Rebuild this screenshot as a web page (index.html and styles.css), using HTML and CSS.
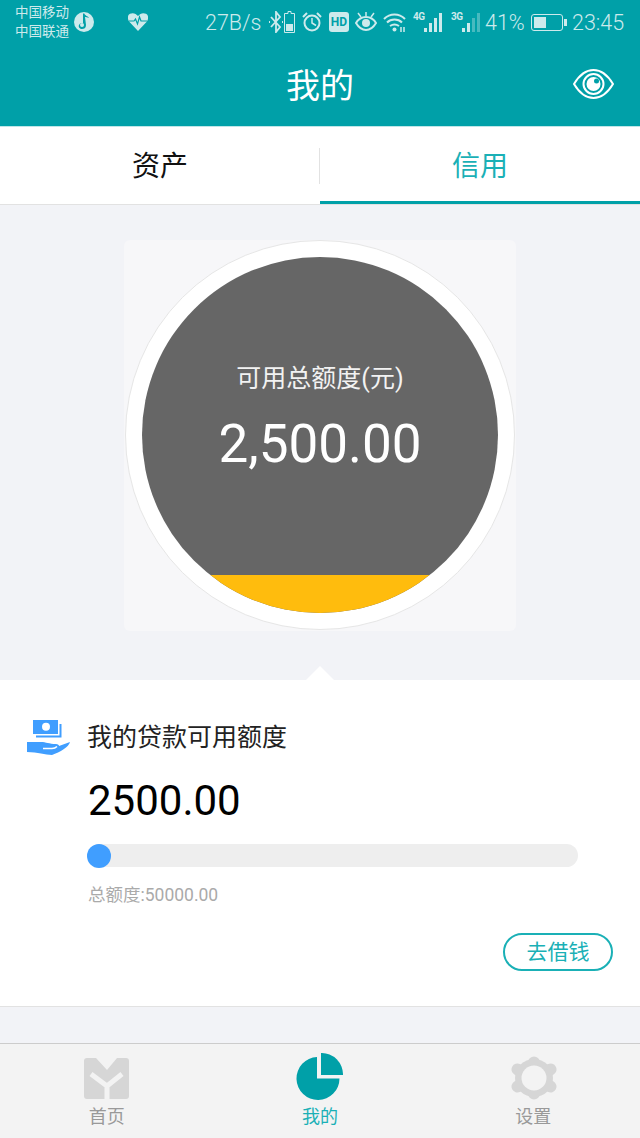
FILE: index.html
```html
<!DOCTYPE html>
<html lang="zh-CN">
<head>
	<meta charset="UTF-8">
	<title>我的</title>
	<link rel="stylesheet" href="styles.css">
</head>
<body>
	<div class="page">
		<div class="top">
			<div class="status">
				<div class="carrier">中国移动<br>中国联通</div>
				<svg class="ic-music" width="20" height="20" viewBox="0 0 20 20"><circle cx="10" cy="10" r="10" fill="#cdeaec"/><path d="M9 2l1-1c1 3 4 3 5 5-2-1-3-1-4-1l1 8c0 3-2 4-4 4s-4-2-3-4 3-2 4-2z" fill="#00a0a8"/><circle cx="8" cy="13" r="2" fill="#cdeaec"/></svg>
				<svg class="ic-heart" width="20" height="18" viewBox="0 0 20 18"><path d="M10 18L1.500 9C-1 6-.5 2 2 .8 5-.7 8 .5 10 3c2-2.500 5-3.700 8-2.200 2.500 1.200 3 5.200.5 8.200z" fill="#cdeaec"/><path d="M1 8h5l1.500-2 2 5 2-7 1.500 4h6" fill="none" stroke="#00a0a8" stroke-width="1.200"/></svg>
				<span class="speed">27B/s</span>
				<svg class="ic-bt" width="14" height="22" viewBox="0 0 14 22"><path d="M2 6l9 10-4 5V1l4 5-9 10" fill="none" stroke="#cdeaec" stroke-width="1.800"/><path d="M0 11h1M13 11h1" stroke="#cdeaec" stroke-width="2"/></svg>
				<svg class="ic-batt" width="11" height="22" viewBox="0 0 11 22"><path d="M4 .5h3v2h3.500v19H.5v-19H4z" fill="none" stroke="#cdeaec"/><rect x="2" y="13" width="7" height="7" fill="#cdeaec"/></svg>
				<svg class="ic-alarm" width="20" height="20" viewBox="0 0 20 20"><circle cx="10" cy="11" r="7.500" fill="none" stroke="#cdeaec" stroke-width="2"/><path d="M10 6v5l4 2.500" fill="none" stroke="#cdeaec" stroke-width="1.500"/><path d="M1 5l4-4M19 5l-4-4" stroke="#cdeaec" stroke-width="2"/></svg>
				<span class="hd">HD</span>
				<svg class="ic-eye" width="22" height="20" viewBox="0 0 22 20"><path d="M1 11c3-5 7-6 10-6s7 1 10 6c-3 5-7 7-10 7s-7-2-10-7z" fill="none" stroke="#cdeaec" stroke-width="2"/><circle cx="11" cy="11" r="4" fill="#cdeaec"/><path d="M3 1l3 4M19 1l-3 4M11 0v4" stroke="#cdeaec" stroke-width="1.500"/></svg>
				<svg class="ic-wifi" width="24" height="20" viewBox="0 0 24 20"><path d="M1 7c6-6 15-6 21 0M4 10.500c4-4 11-4 15 0M7 14c3-2 6-2 9 0" fill="none" stroke="#cdeaec" stroke-width="2"/><circle cx="11.500" cy="17.500" r="2" fill="#cdeaec"/><path d="M18 15v5M21 15v5" stroke="#cdeaec" stroke-width="1.500"/></svg>
				<div class="signal">
					<span class="net">4G</span>
					<i class="bar bar1"></i><i class="bar bar2"></i><i class="bar bar3"></i><i class="bar bar4"></i>
				</div>
				<div class="signal">
					<span class="net">3G</span>
					<i class="bar bar1"></i><i class="bar bar2"></i><i class="bar bar3 off"></i><i class="bar bar4 off"></i>
				</div>
				<span class="pct">41%</span>
				<div class="batt"><div class="batt-fill"></div></div>
				<div class="batt-tip"></div>
				<span class="time">23:45</span>
			</div>
			<div class="titlebar">
				<div class="title">我的</div>
				<svg class="ic-view" width="41" height="30" viewBox="0 0 41 30"><path d="M1 15C7 5 14 1 20.500 1S34 5 40 15C34 25 27 29 20.500 29S7 25 1 15z" fill="none" stroke="#fff" stroke-width="2"/><circle cx="20.500" cy="15" r="10" fill="none" stroke="#fff" stroke-width="2"/><circle cx="20.500" cy="15" r="7" fill="#fff"/><circle cx="23.500" cy="12" r="2.500" fill="#00a0a8"/></svg>
			</div>
		</div>

		<div class="tabs">
			<div class="tab">资产</div>
			<div class="tab tab-on">信用</div>
		</div>

		<div class="gauge-area">
			<div class="gauge-box">
				<div class="gauge-ring">
					<div class="gauge">
						<div class="gauge-main">
							<div class="gauge-label">可用总额度(元)</div>
							<div class="gauge-num">2,500.00</div>
						</div>
						<div class="gauge-level"></div>
					</div>
				</div>
			</div>
		</div>

		<div class="panel">
			<div class="arrow"></div>
			<div class="panel-head">
				<svg class="ic-loan" width="44" height="37" viewBox="0 0 44 37"><rect x="7" y="1" width="25" height="14" fill="#409eff"/><circle cx="20" cy="7.700" r="4" fill="#fff"/><path d="M34.500 5V17.500H10" fill="none" stroke="#409eff" stroke-width="2"/><path d="M1 23H15C20 23 23 25 30 25 32 25 33 26 33 27L44 23C43 28 34 33 26 36 19 36 12 33 1 33z" fill="#409eff"/><path d="M17 29.500H26Q29 29.500 31 27.500" fill="none" stroke="#fff" stroke-width="1.500"/></svg>
				<div class="panel-title">我的贷款可用额度</div>
			</div>
			<div class="panel-body">
				<div class="amount">2500.00</div>
				<div class="track"><div class="dot"></div></div>
				<div class="total">总额度:50000.00</div>
			</div>
			<div class="panel-foot">
				<div class="borrow">去借钱</div>
			</div>
		</div>

		<div class="spacer"></div>

		<div class="nav">
			<div class="nav-item">
				<svg class="nav-ic" width="47" height="48" viewBox="0 0 47 48"><path d="M4 5H13L24 17 34 5H43A3 3 0 0 1 46 8V43A3 3 0 0 1 43 46H4A3 3 0 0 1 1 43V8A3 3 0 0 1 4 5z" fill="#d6d6d6"/><path d="M8 21L24 33 39 21M24 33V46" fill="none" stroke="#f3f3f3" stroke-width="5"/></svg>
				<span>首页</span>
			</div>
			<div class="nav-item nav-on">
				<svg class="nav-ic" width="47" height="48" viewBox="0 0 47 48"><path d="M21 4V25.500H43.500A21.500 21.500 0 1 1 21 4z" fill="#00a0a8"/><path d="M25 0A21.500 21.500 0 0 1 47 22H25z" fill="#00a0a8"/></svg>
				<span>我的</span>
			</div>
			<div class="nav-item">
				<svg class="nav-ic" width="48" height="48" viewBox="0 0 48 48"><circle cx="25" cy="25" r="19" fill="#d6d6d6"/><path d="M25 25V9.500M25 25L41.500 16.500M25 25L41.500 33.500M25 25V40.500M25 25L8.500 33.500M25 25L8.500 16.500" fill="none" stroke="#d6d6d6" stroke-width="12" stroke-linecap="round"/><circle cx="25" cy="25" r="12.500" fill="#f3f3f3"/></svg>
				<span>设置</span>
			</div>
		</div>
	</div>
</body>
</html>
```

FILE: styles.css
```css
*{
	margin: 0;
	padding: 0;
	box-sizing: border-box;
}
body{
	font-family: Roboto, "Noto Sans CJK SC", sans-serif;
	background-color: #f2f3f7;
}
.page{
	width: 640px;
	height: 1138px;
	display: flex;
	flex-direction: column;
	overflow: hidden;
}

/* top bar */
.top{
	height: 126px;
	background-color: #00a0a8;
}
.status{
	height: 44px;
	padding-left: 15px;
	display: flex;
	align-items: center;
	color: #cdeaec;
}
.carrier{
	width: 55px;
	font-size: 13.5px;
	line-height: 19px;
	margin-top: -1px;
	white-space: nowrap;
}
.status svg{
	flex-shrink: 0;
}
.ic-music{
	margin-left: 4px;
}
.ic-heart{
	margin-left: 34px;
}
.speed{
	margin-left: 57px;
	width: 57px;
	font-size: 21.5px;
	font-weight: 300;
	white-space: nowrap;
}
.ic-bt{
	margin-left: 7px;
}
.ic-batt{
	margin-left: 1px;
}
.ic-alarm{
	margin-left: 7px;
}
.hd{
	margin-left: 7px;
	width: 20px;
	height: 20px;
	border-radius: 3px;
	background-color: #cdeaec;
	color: #00a0a8;
	font-size: 12px;
	font-weight: 700;
	line-height: 20px;
	text-align: center;
}
.ic-eye{
	margin-left: 6px;
}
.ic-wifi{
	margin-left: 6px;
}
.signal{
	margin: -1px 0 0 6px;
	width: 31px;
	height: 20px;
	display: flex;
	align-items: flex-end;
	gap: 2px;
}
.signal + .signal{
	margin-left: 7px;
}
.net{
	width: 10px;
	margin-right: -1px;
	align-self: flex-start;
	font-size: 10px;
	font-weight: 700;
	letter-spacing: -0.5px;
	line-height: 9px;
}
.bar{
	width: 3px;
	background-color: #cdeaec;
}
.bar1{
	height: 4px;
}
.bar2{
	height: 9px;
}
.bar3{
	height: 14px;
}
.bar4{
	height: 19px;
}
.off{
	opacity: 0.35;
}
.pct{
	margin-left: 3px;
	width: 40px;
	font-size: 21.5px;
	font-weight: 300;
	white-space: nowrap;
}
.batt{
	margin-left: 6px;
	width: 32px;
	height: 17px;
	padding: 2px;
	border: 1px solid #cdeaec;
	border-radius: 3px;
}
.batt-fill{
	width: 12px;
	height: 100%;
	background-color: #cdeaec;
}
.batt-tip{
	width: 3px;
	height: 7px;
	margin-left: 1px;
	background-color: #cdeaec;
}
.time{
	margin-left: 5px;
	font-size: 21.5px;
	font-weight: 300;
}
.titlebar{
	height: 82px;
	padding-right: 26px;
	display: flex;
	align-items: center;
	justify-content: flex-end;
	position: relative;
}
.title{
	position: absolute;
	left: 0;
	right: 0;
	top: 19px;
	text-align: center;
	font-size: 34px;
	line-height: 46px;
	color: #fff;
}
.ic-view{
	margin-top: -2px;
}

/* tabs */
.tabs{
	height: 79px;
	background-color: #fff;
	border-top: 1px solid #bfe6e8;
	border-bottom: 1px solid #e2e2e2;
	display: flex;
}
.tab{
	width: 320px;
	height: 77px;
	font-size: 28px;
	line-height: 79px;
	text-align: center;
	color: #111;
}
.tab:first-child{
	position: relative;
}
.tab:first-child::after{
	content: "";
	position: absolute;
	right: 0;
	top: 21px;
	height: 36px;
	width: 1px;
	background-color: #e2e2e2;
}
.tab-on{
	color: #1ab0b6;
	border-bottom: 3px solid #00a0a8;
}

/* round gauge */
.gauge-area{
	height: 475px;
	padding-top: 35px;
	display: flex;
	justify-content: center;
}
.gauge-box{
	width: 392px;
	height: 391px;
	border-radius: 6px;
	background-color: #f7f7f9;
	display: flex;
	justify-content: center;
}
.gauge-ring{
	width: 390px;
	height: 390px;
	padding: 16px;
	border-radius: 50%;
	background-color: #fff;
	border: 1px solid #e6e6e6;
}
.gauge{
	height: 100%;
	border-radius: 50%;
	background-color: #666;
	overflow: hidden;
	display: flex;
	flex-direction: column;
	color: #fff;
	text-align: center;
}
.gauge-main{
	flex: 1;
	padding-top: 103px;
}
.gauge-label{
	font-size: 25px;
	line-height: 38px;
	color: #f2f2f2;
}
.gauge-num{
	margin-top: 15px;
	font-size: 53px;
	line-height: 62px;
}
.gauge-level{
	height: 38px;
	background-color: #ffbc0d;
}

/* loan panel */
.panel{
	height: 327px;
	background-color: #fff;
	border-bottom: 1px solid #e2e2e2;
	position: relative;
}
.arrow{
	position: absolute;
	left: 306px;
	top: -14px;
	border-left: 14px solid transparent;
	border-right: 14px solid transparent;
	border-bottom: 14px solid #fff;
}
.panel-head{
	padding: 39px 0 0 26px;
	display: flex;
	align-items: center;
}
.panel-title{
	margin-left: 17px;
	font-size: 25px;
	line-height: 37px;
	color: #222;
}
.panel-body{
	padding: 0 62px 0 88px;
}
.amount{
	margin-top: 17px;
	font-size: 42px;
	line-height: 56px;
	color: #000;
}
.track{
	margin-top: 15px;
	height: 23px;
	border-radius: 12px;
	background-color: #eee;
}
.dot{
	width: 24px;
	height: 24px;
	margin-left: -1px;
	border-radius: 50%;
	background-color: #409eff;
}
.total{
	margin-top: 16px;
	font-size: 17.5px;
	line-height: 24px;
	color: #aaa;
}
.panel-foot{
	padding: 26px 27px 0 0;
	display: flex;
	justify-content: flex-end;
}
.borrow{
	width: 110px;
	height: 38px;
	border: 2px solid #1ab0b6;
	border-radius: 19px;
	font-size: 21px;
	line-height: 34px;
	text-align: center;
	color: #1ab0b6;
}

.spacer{
	height: 36px;
}

/* bottom nav */
.nav{
	flex: 1;
	background-color: #f3f3f3;
	border-top: 1px solid #ccc;
	display: flex;
}
.nav-item{
	flex: 1;
	padding-top: 9px;
	display: flex;
	flex-direction: column;
	align-items: center;
	font-size: 18px;
	line-height: 26px;
	color: #999;
}
.nav-item span{
	margin-top: 3px;
}
.nav-on{
	color: #1ab0b6;
}
.nav-ic{
	flex-shrink: 0;
}
```
